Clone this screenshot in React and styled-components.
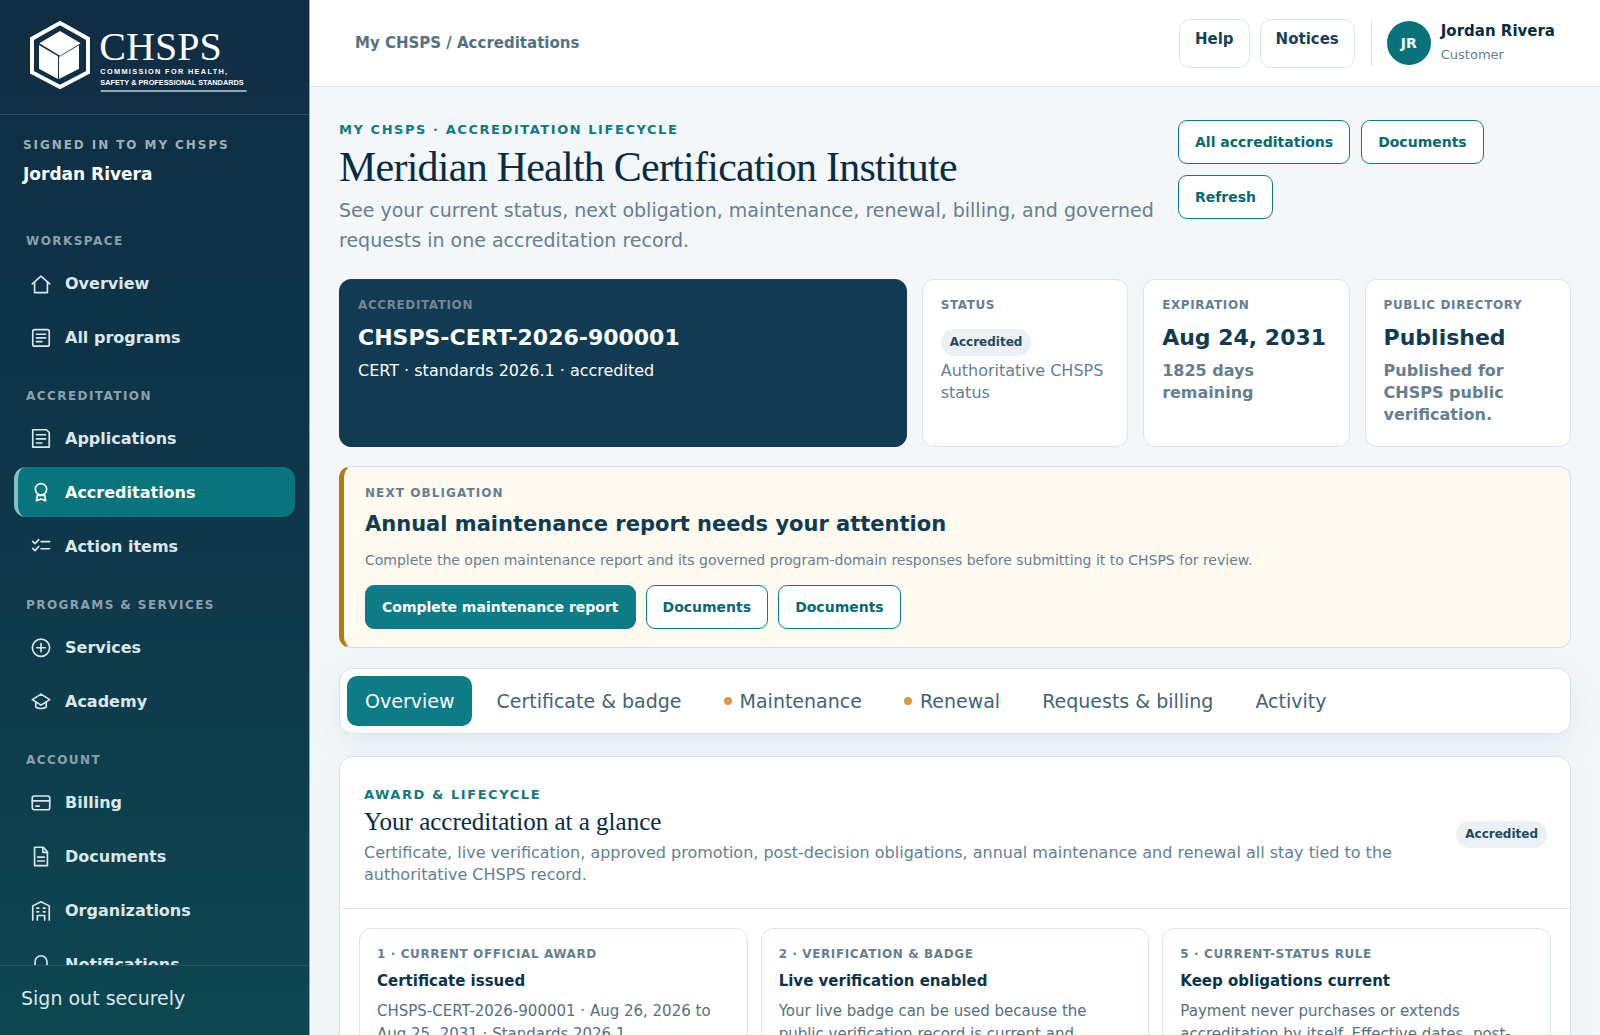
import React, { useState } from 'react'
import styled, { createGlobalStyle } from 'styled-components';

const GlobalStyle = createGlobalStyle`
    *, *::before, *::after { box-sizing: border-box; }
    body {
        margin: 0;
        font-family: "DejaVu Sans", Verdana, sans-serif;
        background: #f3f7fa;
        color: #0d3349;
    }
    h1, h2, h3, p { margin: 0; }
    a { color: inherit; text-decoration: none; }
    button { font-family: inherit; cursor: pointer; }
`;

const ICONS = {
    home: <><path d="M2.5 13 12 4.5 21.5 13" /><path d="M5 11.2V22.5h14V11.2" /></>,
    programs: <><rect x="3" y="4" width="18" height="18" rx="2.2" /><path d="M7 9h10M7 13h10M7 17h6" /></>,
    application: <><path d="M3 3h15l3 3v16H3z" /><path d="M7 8.5h10M7 13h10M7 17.5h6" /></>,
    award: <><circle cx="12" cy="9" r="6.2" /><path d="M8.2 14.2 7 21.5l5-1.8 5 1.8-1.2-7.3" /><path d="M9 15.8h6" /></>,
    checks: <><path d="m3 7 2.5 2.5L9.5 5M3 14.5l2.5 2.5 4-4.5M12 7.2h9.5M12 15h9.5" /></>,
    plus: <><circle cx="12" cy="12.8" r="9.4" /><path d="M12 8.3v9M7.5 12.8h9" /></>,
    academy: <><path d="m2.5 10.5 9.5-6 9.5 6-9.5 6z" /><path d="M6.3 13v5.2c1.8 2.6 9.6 2.6 11.4 0V13" /></>,
    card: <><rect x="2.5" y="5.5" width="19" height="15" rx="2.2" /><path d="M2.5 10.8h19M6.5 16.5h3.5" /></>,
    document: <><path d="M5 2.5h9.5L19 7.5v15H5z" /><path d="M14 2.8V8h5M8.3 13.2h7.4M8.3 17.5h7.4" /></>,
    building: <><path d="M3 23V7.5l9-4.5 9 4.5V23" /><path d="M8 23v-5h8v5M7.5 10h2M14.5 10h2M7.5 14h2M14.5 14h2" /></>,
    bell: <><path d="M5.5 18V9.5a6.5 6.5 0 0 1 13 0V18l2 2h-17z" /><path d="M10 22.5h4" /></>,
};

const NAV = [
    { label: 'Workspace', items: [['home', 'Overview'], ['programs', 'All programs']] },
    { label: 'Accreditation', items: [['application', 'Applications'], ['award', 'Accreditations'], ['checks', 'Action items']] },
    { label: 'Programs & Services', items: [['plus', 'Services'], ['academy', 'Academy']] },
    { label: 'Account', items: [['card', 'Billing'], ['document', 'Documents'], ['building', 'Organizations'], ['bell', 'Notifications']] },
];

const TABS = [
    { name: 'Overview' },
    { name: 'Certificate & badge' },
    { name: 'Maintenance', due: true },
    { name: 'Renewal', due: true },
    { name: 'Requests & billing' },
    { name: 'Activity' },
];

const STEPS = [
    {
        label: '1 · Current official award',
        title: 'Certificate issued',
        text: 'CHSPS-CERT-2026-900001 · Aug 26, 2026 to Aug 25, 2031 · Standards 2026.1',
    },
    {
        label: '2 · Verification & badge',
        title: 'Live verification enabled',
        text: 'Your live badge can be used because the public verification record is current and published.',
    },
    {
        label: '5 · Current-status rule',
        title: 'Keep obligations current',
        text: 'Payment never purchases or extends accreditation by itself. Effective dates, post-decision obligations and maintenance apply.',
    },
];

function Logo(){
    return (
        <svg width="220" height="72" viewBox="0 0 660 216" role="img" aria-label="CHSPS">
            <path d="M90 9 174 56v101l-84 44L6 157V56z" fill="none" stroke="#fff" strokeWidth="12" />
            <path d="M90 33 152 70 90 107 28 70z" fill="#fff" />
            <path d="M27 75 84 109v68l-57-31z" fill="#fff" />
            <path d="M147 76 87 111v66l60-31z" fill="#fff" />
            <text x="208" y="119" fontSize="120" fill="#fff" fontFamily="Liberation Serif, serif">CHSPS</text>
            <text x="211" y="163" fontSize="22" letterSpacing="4" fontWeight="700" fill="#fff" fontFamily="Liberation Sans, sans-serif">COMMISSION FOR HEALTH,</text>
            <text x="211" y="195" fontSize="22" fontWeight="700" fill="#fff" fontFamily="Liberation Sans, sans-serif">SAFETY &amp; PROFESSIONAL STANDARDS</text>
            <path d="M212 213h438" stroke="#b9d3da" strokeWidth="4" />
        </svg>
    )
}

function Sidebar(){
    return (
        <Side>
            <Brand href="#home"><Logo /></Brand>
            <SignedIn>
                <small>Signed in to My CHSPS</small>
                <strong>Jordan Rivera</strong>
            </SignedIn>
            <Nav aria-label="Main">
                {NAV.map(group => (
                    <NavGroup key={group.label}>
                        <span>{group.label}</span>
                        {group.items.map(([icon, name]) => (
                            <NavLink key={name} href="#nav" $active={name === 'Accreditations'}>
                                <svg viewBox="0 0 24 24" aria-hidden="true">{ICONS[icon]}</svg>
                                {name}
                            </NavLink>
                        ))}
                    </NavGroup>
                ))}
            </Nav>
            <SignOut type="button">Sign out securely</SignOut>
        </Side>
    )
}

function Topbar(){
    return (
        <Bar>
            <Crumb>My CHSPS / Accreditations</Crumb>
            <BarLink href="#help">Help</BarLink>
            <BarLink href="#notices">Notices</BarLink>
            <User>
                <Avatar>JR</Avatar>
                <div>
                    <strong>Jordan Rivera</strong>
                    <span>Customer</span>
                </div>
            </User>
        </Bar>
    )
}

function App(){
    const [tab, setTab] = useState('Overview');
    return (
        <>
            <GlobalStyle />
            <Shell>
                <Sidebar />
                <Page>
                    <Topbar />
                    <Content>
                        <Intro>
                            <div>
                                <Eyebrow>My CHSPS · Accreditation lifecycle</Eyebrow>
                                <h1>Meridian Health Certification Institute</h1>
                                <p>See your current status, next obligation, maintenance, renewal, billing, and governed requests in one accreditation record.</p>
                            </div>
                            <Actions $gap={11}>
                                <Button type="button">All accreditations</Button>
                                <Button type="button">Documents</Button>
                                <Button type="button">Refresh</Button>
                            </Actions>
                        </Intro>

                        <Stats>
                            <Stat $dark>
                                <Label $muted>Accreditation</Label>
                                <Value>CHSPS-CERT-2026-900001</Value>
                                <p>CERT · standards 2026.1 · accredited</p>
                            </Stat>
                            <Stat>
                                <Label>Status</Label>
                                <BadgeRow><Badge>Accredited</Badge></BadgeRow>
                                <p>Authoritative CHSPS status</p>
                            </Stat>
                            <Stat $strong>
                                <Label>Expiration</Label>
                                <Value>Aug 24, 2031</Value>
                                <p>1825 days remaining</p>
                            </Stat>
                            <Stat $strong>
                                <Label>Public directory</Label>
                                <Value>Published</Value>
                                <p>Published for CHSPS public verification.</p>
                            </Stat>
                        </Stats>

                        <Obligation>
                            <Label $wide>Next obligation</Label>
                            <h2>Annual maintenance report needs your attention</h2>
                            <p>Complete the open maintenance report and its governed program-domain responses before submitting it to CHSPS for review.</p>
                            <Actions $gap={10}>
                                <Button type="button" $primary>Complete maintenance report</Button>
                                <Button type="button">Documents</Button>
                                <Button type="button">Documents</Button>
                            </Actions>
                        </Obligation>

                        <Tabs role="tablist">
                            {TABS.map(({ name, due }) => (
                                <Tab key={name} type="button" role="tab" aria-selected={tab === name} $active={tab === name} onClick={() => setTab(name)}>
                                    {due && <Dot />}
                                    {name}
                                </Tab>
                            ))}
                        </Tabs>

                        <Panel>
                            <PanelHead>
                                <div>
                                    <Eyebrow $tall>Award &amp; lifecycle</Eyebrow>
                                    <h2>Your accreditation at a glance</h2>
                                    <p>Certificate, live verification, approved promotion, post-decision obligations, annual maintenance and renewal all stay tied to the authoritative CHSPS record.</p>
                                </div>
                                <Badge>Accredited</Badge>
                            </PanelHead>
                            <Steps>
                                {STEPS.map(step => (
                                    <Step key={step.title}>
                                        <Label>{step.label}</Label>
                                        <h3>{step.title}</h3>
                                        <p>{step.text}</p>
                                    </Step>
                                ))}
                            </Steps>
                        </Panel>
                    </Content>
                </Page>
            </Shell>
        </>
    )
}

const Shell = styled.div`
    display: flex;
    height: 100vh;
    overflow: hidden;
`;

const Side = styled.aside`
    flex: 0 0 310px;
    display: flex;
    flex-direction: column;
    border-right: 1px solid #8fa5b0;
    background: linear-gradient(180deg, #102d43 0%, #0e3749 50%, #0c4750 100%);
    color: #dbe7ea;
`;

const Brand = styled.a`
    display: block;
    height: 115px;
    padding: 20px 30px;
    border-bottom: 1px solid #234e62;
    svg{
        display: block;
    }
`;

const SignedIn = styled.div`
    height: 116px;
    padding: 20px 23px;
    small{
        display: block;
        font-size: 12px;
        line-height: 20px;
        font-weight: bold;
        letter-spacing: 0.16em;
        text-transform: uppercase;
        color: #9db0b9;
    }
    strong{
        display: block;
        margin-top: 8px;
        font-size: 17px;
        line-height: 22px;
        color: #fff;
    }
`;

const Nav = styled.nav`
    flex: 1;
    min-height: 0;
    overflow-y: auto;
    scrollbar-width: none;
    display: flex;
    flex-direction: column;
    gap: 24px;
    padding: 0 14px;
`;

const NavGroup = styled.div`
    display: flex;
    flex-direction: column;
    gap: 4px;
    span{
        margin-bottom: 3px;
        padding: 0 12px;
        font-size: 12px;
        line-height: 20px;
        font-weight: bold;
        letter-spacing: 0.12em;
        text-transform: uppercase;
        color: #8ba1ab;
    }
`;

const NavLink = styled.a`
    display: flex;
    align-items: center;
    gap: 13px;
    height: 50px;
    padding: 0 12px;
    border-left: 4px solid ${p => p.$active ? '#86bfc4' : 'transparent'};
    border-radius: 12px;
    background: ${p => p.$active ? '#08747b' : 'transparent'};
    color: ${p => p.$active ? '#fff' : '#dbe7ea'};
    font-size: 16px;
    font-weight: bold;
    svg{
        width: 22px;
        height: 22px;
        fill: none;
        stroke: currentColor;
        stroke-width: 1.8;
        stroke-linecap: round;
        stroke-linejoin: round;
    }
`;

const SignOut = styled.button`
    height: 70px;
    padding: 0 21px 6px;
    border: 0;
    border-top: 1px solid #2b5364;
    background: none;
    color: #dbe7ea;
    font-size: 19px;
    text-align: left;
`;

const Page = styled.div`
    flex: 1;
    min-width: 0;
    display: flex;
    flex-direction: column;
`;

const Bar = styled.header`
    display: flex;
    align-items: center;
    gap: 10px;
    flex: 0 0 87px;
    padding: 0 45px;
    background: #fff;
    border-bottom: 1px solid #d7e6ea;
`;

const Crumb = styled.span`
    flex: 1;
    font-size: 15px;
    font-weight: bold;
    color: #54717f;
`;

const BarLink = styled.a`
    height: 49px;
    padding: 9px 15px;
    border: 1px solid #d7e6ea;
    border-radius: 11px;
    font-size: 15px;
    line-height: 20px;
    font-weight: bold;
    color: #17415a;
`;

const User = styled.div`
    display: flex;
    align-items: center;
    gap: 10px;
    margin-left: 6px;
    padding-left: 15px;
    border-left: 1px solid #d7e6ea;
    strong, span{
        display: block;
        line-height: 23px;
    }
    strong{
        font-size: 15px;
        color: #082d43;
    }
    span{
        font-size: 13px;
        color: #648090;
    }
`;

const Avatar = styled.div`
    display: grid;
    place-items: center;
    width: 44px;
    height: 44px;
    border-radius: 50%;
    background: #07727a;
    color: #fff;
    font-size: 14px;
    font-weight: bold;
`;

const Content = styled.main`
    flex: 1;
    min-height: 0;
    overflow-y: auto;
    scrollbar-width: none;
    padding: 33px 29px;
`;

const Eyebrow = styled.div`
    font-size: 13px;
    line-height: ${p => p.$tall ? 26 : 20}px;
    font-weight: bold;
    letter-spacing: 0.12em;
    text-transform: uppercase;
    color: #0d7b82;
`;

const Intro = styled.section`
    display: grid;
    grid-template-columns: minmax(0, 1fr) 393px;
    gap: 16px;
    align-items: start;
    margin-bottom: 24px;
    h1{
        margin: 4px 0 5px;
        font-family: "Liberation Serif", "Times New Roman", serif;
        font-size: 42px;
        line-height: 46px;
        font-weight: normal;
        letter-spacing: -0.018em;
        color: #082d43;
    }
    p{
        font-size: 19px;
        line-height: 30px;
        color: #648090;
    }
`;

const Actions = styled.div`
    display: flex;
    flex-wrap: wrap;
    gap: ${p => p.$gap}px;
`;

const Button = styled.button`
    height: 44px;
    padding: 0 16px;
    border: 1px solid #0e7c86;
    border-radius: 9px;
    background: ${p => p.$primary ? '#0e7c86' : '#fff'};
    color: ${p => p.$primary ? '#fff' : '#076971'};
    font-size: 14px;
    font-weight: bold;
`;

const Stats = styled.section`
    display: grid;
    grid-template-columns: 11fr 4fr 4fr 4fr;
    gap: 15px;
    margin-bottom: 19px;
`;

const Stat = styled.article`
    padding: 18px 18px 20px;
    border: 1px solid ${p => p.$dark ? '#103b53' : '#d9e6eb'};
    border-radius: 12px;
    background: ${p => p.$dark ? '#103b53' : '#fff'};
    color: ${p => p.$dark ? '#fff' : '#103b53'};
    > p{
        font-size: 16px;
        line-height: 22px;
        font-weight: ${p => p.$strong ? 'bold' : 'normal'};
        color: ${p => p.$dark ? '#fff' : '#648090'};
    }
`;

const Label = styled.div`
    font-size: 12px;
    line-height: 14px;
    font-weight: bold;
    letter-spacing: ${p => p.$wide ? '0.09em' : '0.05em'};
    text-transform: uppercase;
    color: ${p => p.$muted ? '#6f8995' : '#648090'};
`;

const Value = styled.div`
    margin: 12px 0 8px;
    font-size: 22px;
    line-height: 28px;
    font-weight: bold;
`;

const BadgeRow = styled.div`
    display: flex;
    margin: 17px 0 4px;
`;

const Badge = styled.span`
    flex: none;
    padding: 0 9px;
    border-radius: 14px;
    background: #eaf0f3;
    color: #1c4b5c;
    font-size: 12px;
    line-height: 27px;
    font-weight: bold;
`;

const Obligation = styled.section`
    margin-bottom: 20px;
    padding: 19px 21px 18px;
    border: 1px solid #d3e4ea;
    border-left: 5px solid #b37a14;
    border-radius: 12px;
    background: #fffaef;
    h2{
        margin: 10px 0 12px;
        font-size: 21px;
        line-height: 28px;
        color: #103b53;
    }
    p{
        margin-bottom: 14px;
        font-size: 14px;
        line-height: 21px;
        color: #648090;
    }
`;

const Tabs = styled.div`
    display: flex;
    gap: 6px;
    margin-bottom: 22px;
    padding: 7px;
    border: 1px solid #d3e4ea;
    border-radius: 14px;
    background: #fff;
    box-shadow: 0 10px 30px rgba(16, 59, 83, 0.08);
`;

const Tab = styled.button`
    display: flex;
    align-items: center;
    gap: 8px;
    height: 50px;
    padding: 0 18px;
    border: 0;
    border-radius: 10px;
    background: ${p => p.$active ? '#0e7c86' : 'transparent'};
    color: ${p => p.$active ? '#fff' : '#416475'};
    font-size: 19px;
`;

const Dot = styled.i`
    width: 8px;
    height: 8px;
    border-radius: 50%;
    background: #d79a45;
`;

const Panel = styled.section`
    border: 1px solid #d3e4ea;
    border-radius: 14px;
    background: #fff;
    box-shadow: 0 10px 30px rgba(16, 59, 83, 0.05);
`;

const PanelHead = styled.div`
    display: flex;
    align-items: center;
    justify-content: space-between;
    gap: 24px;
    padding: 25px 23px 22px 24px;
    border-bottom: 1px solid #e1ebef;
    h2{
        margin: 0 0 6px;
        font-family: "Liberation Serif", "Times New Roman", serif;
        font-size: 25px;
        line-height: 28px;
        font-weight: normal;
        color: #082d43;
    }
    p{
        font-size: 16px;
        line-height: 22px;
        color: #648090;
    }
`;

const Steps = styled.div`
    display: grid;
    grid-template-columns: repeat(3, minmax(0, 1fr));
    gap: 13px;
    padding: 19px;
`;

const Step = styled.article`
    padding: 18px 17px;
    border: 1px solid #d9e6eb;
    border-radius: 12px;
    h3{
        margin: 9px 0 8px;
        font-size: 15px;
        line-height: 22px;
        color: #0b3349;
    }
    p{
        font-size: 15px;
        line-height: 23px;
        color: #54717f;
    }
`;

export default App;
